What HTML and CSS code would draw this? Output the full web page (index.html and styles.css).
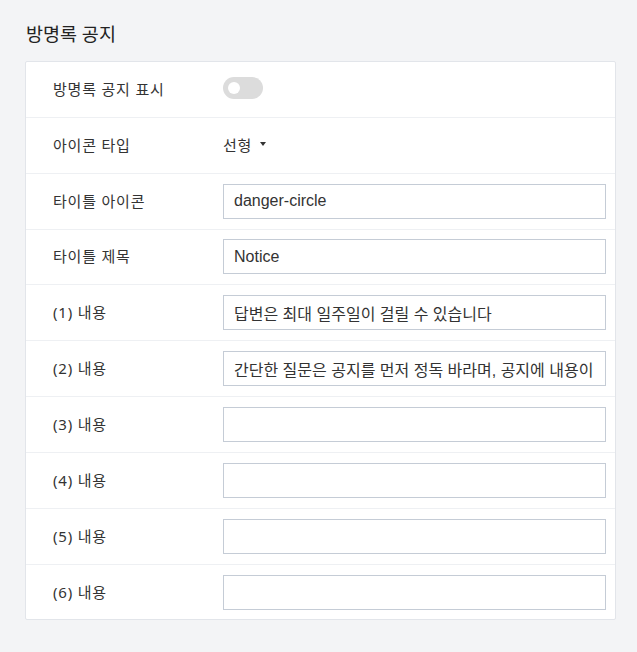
FILE: index.html
```html
<!DOCTYPE html>
<html lang="ko">
<head>
<meta charset="utf-8">
<link rel="stylesheet" href="styles.css">
</head>
<body>
<div class="page">
  <h2 class="title">방명록 공지</h2>
  <div class="card">
    <div class="row">
      <div class="label">방명록 공지 표시</div>
      <div class="field"><span class="toggle"><span class="knob"></span></span></div>
    </div>
    <div class="row">
      <div class="label">아이콘 타입</div>
      <div class="field"><span class="select">선형<span class="caret"></span></span></div>
    </div>
    <div class="row">
      <div class="label">타이틀 아이콘</div>
      <div class="field"><input class="input" type="text" value="danger-circle"></div>
    </div>
    <div class="row">
      <div class="label">타이틀 제목</div>
      <div class="field"><input class="input" type="text" value="Notice"></div>
    </div>
    <div class="row">
      <div class="label">(1) 내용</div>
      <div class="field"><input class="input" type="text" value="답변은 최대 일주일이 걸릴 수 있습니다"></div>
    </div>
    <div class="row">
      <div class="label">(2) 내용</div>
      <div class="field"><input class="input" type="text" value="간단한 질문은 공지를 먼저 정독 바라며, 공지에 내용이 있는 질문은 답변하지 않습니다"></div>
    </div>
    <div class="row">
      <div class="label">(3) 내용</div>
      <div class="field"><input class="input" type="text" value=""></div>
    </div>
    <div class="row">
      <div class="label">(4) 내용</div>
      <div class="field"><input class="input" type="text" value=""></div>
    </div>
    <div class="row">
      <div class="label">(5) 내용</div>
      <div class="field"><input class="input" type="text" value=""></div>
    </div>
    <div class="row">
      <div class="label">(6) 내용</div>
      <div class="field"><input class="input" type="text" value=""></div>
    </div>
  </div>
</div>
</body>
</html>
```

FILE: styles.css
```css
html, body {
  margin: 0;
  padding: 0;
  background: #f3f4f6;
  font-family: "Noto Sans", "Noto Sans CJK KR", sans-serif;
  color: #333;
}
.page {
  padding: 22px 21px 32px 25px;
}
.title {
  margin: 0 0 15px 1px;
  font-size: 18.5px;
  font-weight: 400;
  line-height: 24px;
  color: #222;
}
.card {
  background: #fff;
  border: 1px solid #e2e5ea;
  border-radius: 2px;
}
.row {
  display: flex;
  align-items: center;
  height: 54.85px;
  padding: 0 9px 0 27px;
  border-top: 1px solid #eef0f3;
}
.row:first-child {
  border-top: none;
}
.label {
  width: 170px;
  flex: none;
  font-size: 15px;
  letter-spacing: 0.8px;
  color: #333;
  margin-top: -2px;
}
.field {
  flex: 1;
  display: flex;
  align-items: center;
}
.toggle {
  display: inline-flex;
  align-items: center;
  width: 40px;
  height: 22px;
  border-radius: 11px;
  background: #dcdcdc;
  box-sizing: border-box;
  padding-left: 5px;
  margin-top: -3px;
}
.knob {
  width: 12px;
  height: 12px;
  border-radius: 50%;
  background: #fff;
}
.select {
  font-size: 15px;
  letter-spacing: 0.8px;
  color: #333;
  display: inline-flex;
  align-items: center;
  margin-top: -2px;
}
.caret {
  display: inline-block;
  margin-left: 8px;
  width: 0;
  height: 0;
  border-left: 3.5px solid transparent;
  border-right: 3.5px solid transparent;
  border-top: 4px solid #333;
}
.input {
  width: 100%;
  height: 35px;
  box-sizing: border-box;
  border: 1px solid #c5ccd6;
  border-radius: 0;
  padding: 0 10px;
  font-family: "Liberation Sans", "Noto Sans CJK KR", sans-serif;
  font-size: 16px;
  color: #333;
  background: #fff;
  outline: none;
}
```
